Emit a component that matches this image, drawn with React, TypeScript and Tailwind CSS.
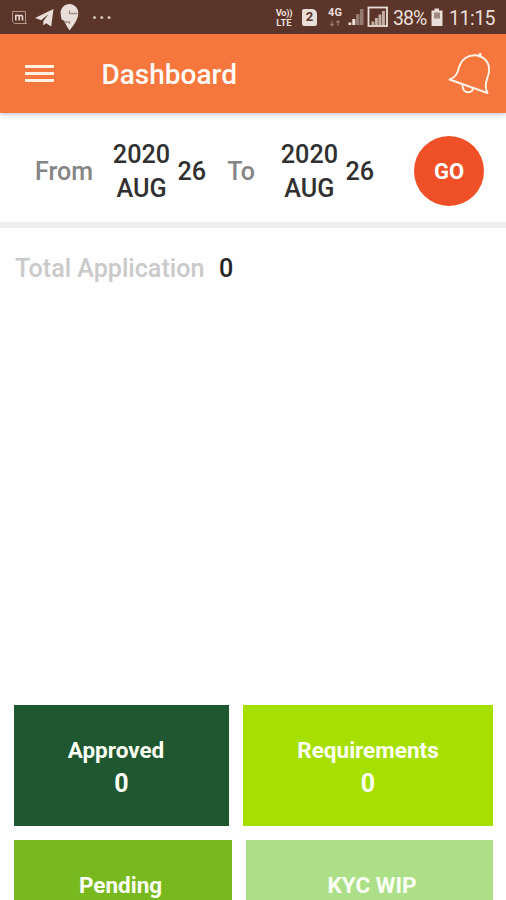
import type { ReactNode } from 'react';

/** Notification icons on the left of the system bar. */
function NotificationIcons() {
  return (
    <svg width="114" height="34" viewBox="0 0 114 34" fill="none">
      <path d="M12.5 11.5h13v12h1.500h-12.500l-2-2z" stroke="#b0978c" strokeWidth="1" />
      <path d="M15.8 20.500v-5h5.500q1.200 0 1.200 1.200V20.500M19.200 15.500V20.500" stroke="#e6d8d0" strokeWidth="1.600" />
      <path d="M53.5 9 35 18l6.200 2.200L48.500 14l-5.200 7.300v4l2.900-2.100 5 3.200z" fill="#eadfd8" />
      <path
        d="M69.5 30.500c-2.200-3.300-4-6-4.800-9.500L61.500 19.500L60.500 12.500C61 7.500 65 4 69.500 4s8.800 3.500 8.800 9c0 6-4 11.500-8.800 17.500z"
        fill="#eadfd8"
      />
      <path d="M69.500 10.500v3h8M64 22h5.500v2" stroke="#a18d83" strokeWidth="1.300" />
      <g fill="#d2bfb6">
        <circle cx="94.500" cy="17.500" r="1.500" />
        <circle cx="101.800" cy="17.500" r="1.500" />
        <circle cx="109" cy="17.500" r="1.500" />
      </g>
    </svg>
  );
}

function SignalIcons() {
  return (
    <svg width="45" height="34" viewBox="0 0 45 34" fill="none">
      <g fill="#f0e4dd">
        <rect x="4.500" y="22.500" width="2.800" height="2.500" />
        <rect x="8.300" y="19" width="3" height="6" />
      </g>
      <g fill="#947a70">
        <rect x="12" y="14" width="3.500" height="11" />
        <rect x="16" y="9" width="3.500" height="16" />
      </g>
      <rect x="24.500" y="7.500" width="18.500" height="18.500" stroke="#eadfd8" strokeWidth="1.800" />
      <g fill="#c4b0a7">
        <rect x="27.500" y="21.500" width="2.900" height="3.500" />
        <rect x="31" y="18" width="2.900" height="7" />
        <rect x="34.500" y="14.500" width="2.900" height="10.500" />
        <rect x="38" y="11" width="2.900" height="14" />
      </g>
    </svg>
  );
}

function BatteryIcon() {
  return (
    <svg width="14" height="34" viewBox="0 0 14 34">
      <path d="M4.500 8.500h4.500v2h3.500v15.500H1.500v-15.500h3z" fill="#eadfd8" />
      <path d="M4 12.500h6v6h-6z" fill="#a08a80" />
    </svg>
  );
}

/** Arrows under the 4G label, down then up. */
function DataArrows() {
  return (
    <svg width="12" height="7" viewBox="0 0 12 7" fill="none" stroke="#947c72" strokeWidth="1.100">
      <path d="M3 .5v5M1.200 4 3 5.800 4.800 4M9 6V1M7.200 2.500 9 .8l1.800 1.700" />
    </svg>
  );
}

function BellIcon() {
  return (
    <svg
      width="46"
      height="46"
      viewBox="446 51 46 46"
      fill="none"
      stroke="#fff4e8"
      strokeWidth="1.900"
      strokeLinecap="round"
      strokeLinejoin="round"
    >
      <path d="M449.500 79.500C456 77.500 457.500 73 459 67.500C461.500 59 468 54.800 476 55.300C485 56.500 490 63.500 489 71.500C488.300 78.500 483 84 487.500 93Z" />
      <path d="M480 56.200v-2" strokeWidth="2.800" />
      <path d="M462.500 85.500C462.500 90.500 465.500 92.500 468.500 92.200C471.500 92 473 90.500 472.500 88.500" />
    </svg>
  );
}

function StatusBar() {
  return (
    <div className="flex h-[34px] shrink-0 items-center bg-[#5b352a] text-[#eadfd8]">
      <NotificationIcons />
      <div className="ml-[160px] w-[20px] pt-px text-center text-[9.500px] leading-[10px] font-bold">
        <div className="tracking-[-0.4px]">Vo))</div>
        <div>LTE</div>
      </div>
      <div className="ml-[8px] flex h-[17px] w-[15px] items-center justify-center rounded-[2px] rounded-tr-[5px] bg-[#eadfd8] text-[13px] font-bold text-[#5b352a]">
        2
      </div>
      <div className="ml-[10px] flex w-[16px] flex-col items-center gap-[2px] text-[11px] leading-[10px] font-bold">
        <span>4G</span>
        <DataArrows />
      </div>
      <div className="ml-[1px]">
        <SignalIcons />
      </div>
      <span className="ml-[4px] w-[34px] pt-[3px] text-[19.500px] tracking-[-1px] whitespace-nowrap">38%</span>
      <div className="ml-[3px]">
        <BatteryIcon />
      </div>
      <span className="ml-[5px] pt-[3px] text-[19.500px] tracking-[-0.500px]">11:15</span>
    </div>
  );
}

function AppBar() {
  return (
    <header className="z-10 flex h-[79px] shrink-0 items-center bg-[#f5773d] text-[#fffaf5] shadow-[0_1px_5px_rgba(60,60,90,0.35)]">
      <button className="mb-px ml-[25px] flex w-[30px] flex-col gap-[4px]">
        <span className="h-[3px] w-[29px] bg-[#fff0df]" />
        <span className="h-[3px] w-[29px] bg-[#fff0df]" />
        <span className="h-[3px] w-[29px] bg-[#fff0df]" />
      </button>
      <h1 className="ml-[46.500px] pt-[2px] text-[28px] leading-[32px] font-medium">Dashboard</h1>
      <button className="mr-[14px] ml-auto">
        <BellIcon />
      </button>
    </header>
  );
}

function DateField({ month, day }: { month: string; day: string }) {
  return (
    <div className="mt-[2px] flex items-center text-[25.200px] leading-[34px] font-medium text-[#303030]">
      <div className="w-[60px] text-center">
        2020
        <br />
        {month}
      </div>
      <span className="ml-[6px]">{day}</span>
    </div>
  );
}

function DateFilter() {
  return (
    <section className="flex h-[115px] shrink-0 items-center border-b-6 border-[#eeeeee] pt-[7px] text-[25px] font-medium text-[#858585]">
      <span className="ml-[35px] w-[76.500px] pt-px">From</span>
      <DateField month="AUG" day="26" />
      <span className="ml-[21px] w-[52.300px] pt-px">To</span>
      <DateField month="AUG" day="26" />
      <button className="mr-[22px] mb-px ml-auto size-[70px] rounded-full bg-[#f05027] pt-[2px] text-[22px] font-bold text-white">
        GO
      </button>
    </section>
  );
}

function StatusCard({ className, label, children }: { className: string; label: ReactNode; children?: ReactNode }) {
  return (
    <div className={`h-[121px] shrink-0 pt-[29px] text-center text-[22.500px] leading-[33px] font-bold text-[#fcfff5] ${className}`}>
      {label}
      {children}
    </div>
  );
}

export default function App() {
  return (
    <div className="flex h-[900px] w-[506px] flex-col overflow-hidden bg-[#fefefe] font-[Roboto,sans-serif]">
      <StatusBar />
      <AppBar />
      <DateFilter />
      <div className="mt-[24px] flex text-[25.100px] leading-[34px] font-medium">
        <span className="ml-[15px] w-[204px] text-[#cacaca]">Total Application</span>
        <span className="text-[#252525]">0</span>
      </div>
      <main className="mt-auto flex h-[195px] shrink-0 flex-col gap-[14px] pl-[14px]">
        <div className="flex gap-[14px]">
          <StatusCard className="w-[215px] bg-[#1f5730]" label={<div className="pr-[11px]">Approved</div>}>
            <div className="text-[25px]">0</div>
          </StatusCard>
          <StatusCard className="w-[250px] bg-[#a6e003]" label="Requirements">
            <div className="text-[25px]">0</div>
          </StatusCard>
        </div>
        <div className="flex gap-[14px]">
          <StatusCard className="w-[218px] bg-[#77b91e] pr-[5px]" label="Pending" />
          <StatusCard className="w-[247px] bg-[#addf89] pl-[5px]" label="KYC WIP" />
        </div>
      </main>
    </div>
  );
}
